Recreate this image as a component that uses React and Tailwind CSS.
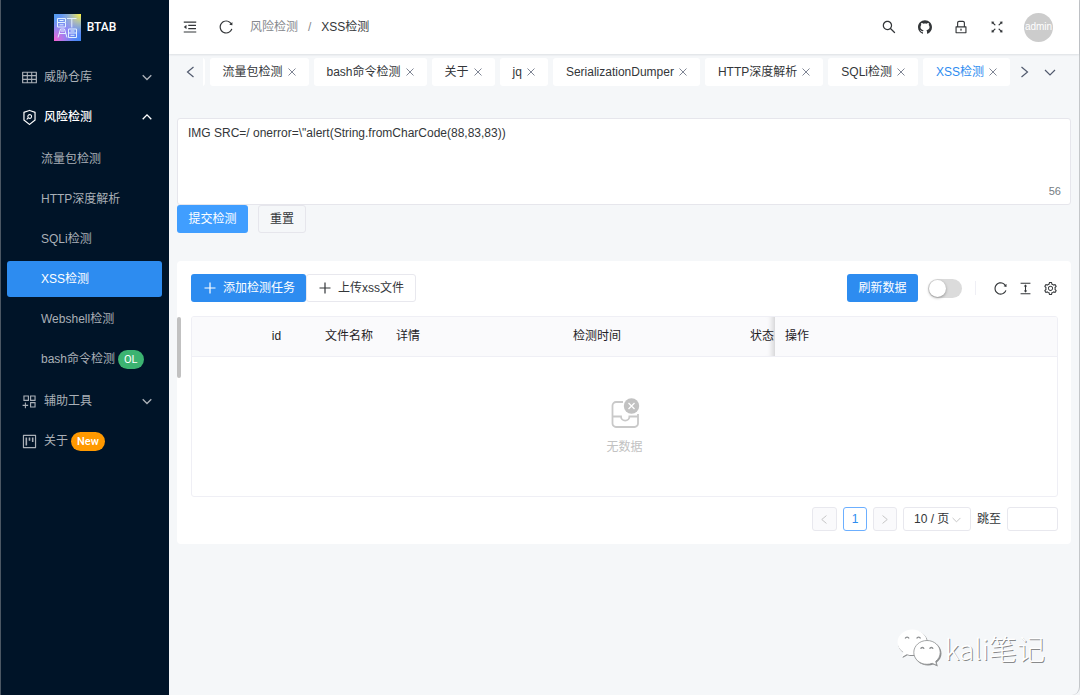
import React, { useState } from 'react';
import {
  AiFillGithub,
  AiOutlineAppstoreAdd,
  AiOutlineColumnHeight,
  AiOutlineFullscreen,
  AiOutlineLock,
  AiOutlineMenuFold,
  AiOutlineProject,
  AiOutlineReload,
  AiOutlineSearch,
  AiOutlineSecurityScan,
  AiOutlineSetting,
  AiOutlineTable,
} from 'react-icons/ai';

const riskItems = [
  { label: '流量包检测' },
  { label: 'HTTP深度解析' },
  { label: 'SQLi检测' },
  { label: 'XSS检测' },
  { label: 'Webshell检测' },
  { label: 'bash命令检测', badge: 'OL' },
];

const tabs = ['流量包检测', 'bash命令检测', '关于', 'jq', 'SerializationDumper', 'HTTP深度解析', 'SQLi检测', 'XSS检测'];

// Simple stroke chevron, picked by direction
const paths = {
  down: 'M2 5l5 5 5-5',
  up: 'M2 9.5l5-5 5 5',
  left: 'M9.5 2l-6 5 6 5',
  right: 'M4.5 2l6 5-6 5',
};

const Chevron = ({ dir, size = 14, width = 1.2 }) => (
  <svg width={size} height={size} viewBox="0 0 14 14" fill="none" stroke="currentColor" strokeWidth={width}>
    <path d={paths[dir]} />
  </svg>
);

const Plus = () => (
  <svg width="12" height="12" viewBox="0 0 12 12" stroke="currentColor" strokeWidth="1.2">
    <path d="M6 0.5v11M0.5 6h11" />
  </svg>
);

const Logo = () => (
  <svg width="27" height="27" viewBox="0 0 27 27" fill="none">
    <defs>
      <linearGradient id="logoBase" x1="0" y1="0" x2="1" y2="1">
        <stop offset="0" stopColor="#4f9df0" />
        <stop offset="0.5" stopColor="#8d8cf5" />
        <stop offset="1" stopColor="#3f86f5" />
      </linearGradient>
      <radialGradient id="logoYellow" cx="1" cy="0" r="0.75">
        <stop offset="0" stopColor="#fff43a" />
        <stop offset="1" stopColor="#9ad6c0" stopOpacity="0" />
      </radialGradient>
      <radialGradient id="logoPink" cx="0" cy="1" r="0.75">
        <stop offset="0" stopColor="#ff5fd0" />
        <stop offset="1" stopColor="#b07cf5" stopOpacity="0" />
      </radialGradient>
    </defs>
    <rect width="27" height="27" fill="url(#logoBase)" />
    <rect width="27" height="27" fill="url(#logoYellow)" />
    <rect width="27" height="27" fill="url(#logoPink)" />
    <g stroke="#e3f1ff" strokeWidth="1">
      <path d="M3.5 4.5h8v4h-8zM3.5 8.5v4.5h8v-4M5.5 6.5h4M5.5 10.8h4" />
      <path d="M13 4.500h9.500M17.800 4.500v9" />
      <path d="M4 23.500l2.500-8.500h4l2.500 8.500M5 19.500h7M7 17h3" />
      <path d="M14.500 15h8v4h-8zM14.500 19v4.500h8V19M16.500 17h4M16.500 21.300h4" />
    </g>
  </svg>
);

const EmptyIcon = () => (
  <svg width="30" height="32" viewBox="0 0 30 32" fill="none">
    <path d="M13 5H6a3.500 3.500 0 0 0-3.500 3.500v18A3.500 3.500 0 0 0 6 30h18.500a3.500 3.500 0 0 0 3.500-3.500V17" stroke="#c9c9c9" strokeWidth="1.800" />
    <path d="M2.500 19.500H11a4.200 4.200 0 0 0 8.400 0H28" stroke="#c9c9c9" strokeWidth="1.800" />
    <circle cx="21.500" cy="9" r="7.700" fill="#c2c2c2" />
    <path d="M18.500 6l6 6M24.500 6l-6 6" stroke="#fff" strokeWidth="1.300" />
  </svg>
);

// Two chat bubbles, the small one laid over the big one
const ChatLogo = () => (
  <svg width="45" height="40" viewBox="0 0 45 40">
    <g fill="#8d8f91">
      <path d="M16 2.500c8.300 0 15 5.700 15 12.800s-6.700 12.800-15 12.800c-2 0-3.800-.3-5.500-.9L5.500 30l1.300-5C3.200 22.600 1 19.200 1 15.300 1 8.200 7.700 2.500 16 2.500z" />
      <path d="M31 13.500c7.500 0 13.500 5.400 13.500 12 0 3.600-1.800 6.700-4.700 8.900l1 4.100-4.500-2c-1.700.6-3.400 1-5.300 1-7.500 0-13.500-5.400-13.500-12s6-12 13.500-12z" />
    </g>
    <path fill="#fff" d="M15.300 1.500c8 0 14.700 5.700 14.700 12.800s-6.700 12.800-14.700 12.800c-2 0-3.800-.3-5.500-.9L5 29l1.200-5C2.700 21.600.500 18.200.500 14.300.500 7.200 7.300 1.500 15.300 1.500z" />
    <path fill="#fff" stroke="#8d8f91" strokeWidth="0.800" d="M30 12.500c7.300 0 13.200 5.300 13.200 11.900 0 3.600-1.700 6.700-4.500 8.900l1 4-4.500-2c-1.700.6-3.300 1-5.200 1-7.300 0-13.200-5.300-13.200-11.900S22.700 12.500 30 12.500z" />
    <g fill="none" stroke="#8d8f91" strokeWidth="1.300">
      <path d="M8.200 10.500a2 2 0 0 1 3.800 0M19.700 10.500a2 2 0 0 1 3.800 0" />
      <path d="M23.700 20.800a1.700 1.700 0 0 1 3.300 0M32.700 20.800a1.700 1.700 0 0 1 3.300 0" />
    </g>
  </svg>
);

const MenuRow = ({ icon, label, bold, dir, badge }) => (
  <a href="#" className={`flex h-9 items-center pl-5 pr-4 ${bold ? 'text-white' : 'text-[#aab0b7]'}`}>
    <span className="mr-[6px]">{icon}</span>
    <span className={bold ? 'font-medium' : ''}>{label}</span>
    {badge && (
      <span className="ml-[3px] rounded-full bg-[#ff9900] px-[6px] font-['Roboto'] text-[11px] leading-[19px] font-medium text-white">{badge}</span>
    )}
    {dir && (
      <span className="ml-auto">
        <Chevron dir={dir} size={12} width={1.6} />
      </span>
    )}
  </a>
);

const Sidebar = () => (
  <aside className="flex w-[169px] shrink-0 flex-col border-l border-[#4b5763] bg-[#001428]">
    <div className="flex h-[54px] items-center justify-center gap-[6px] font-['Roboto'] font-medium text-white">
      <Logo />
      BTAB
    </div>
    <nav className="mt-[5px] flex flex-col gap-1">
      <MenuRow icon={<AiOutlineTable size={17} />} label="威胁仓库" dir="down" />
      <MenuRow icon={<AiOutlineSecurityScan size={17} />} label="风险检测" dir="up" bold />
      <ul className="flex flex-col gap-1 py-[2px] pr-[7px] pl-[6px]">
        {riskItems.map((item) => (
          <li key={item.label}>
            <a
              href="#"
              className={`flex h-9 items-center rounded-[3px] pl-[34px] ${
                item.label === 'XSS检测' ? 'bg-[#2d8cf0] text-white' : 'text-[#aab0b7]'
              }`}
            >
              {item.label}
              {item.badge && (
                <span className="ml-[3px] rounded-full bg-[#3cb371] px-[6px] font-['Roboto'] text-[11px] leading-[19px] text-white">{item.badge}</span>
              )}
            </a>
          </li>
        ))}
      </ul>
      <MenuRow icon={<AiOutlineAppstoreAdd size={17} />} label="辅助工具" dir="down" />
      <MenuRow icon={<AiOutlineProject size={17} />} label="关于" badge="New" />
    </nav>
  </aside>
);

const IconButton = ({ label, className, children }) => (
  <button type="button" aria-label={label} className={`flex items-center justify-center ${className}`}>
    {children}
  </button>
);

const Header = () => (
  <header className="flex h-[54px] items-center bg-white pl-[3px] pr-[26px] text-[#333639] shadow-[0_1px_2px_rgba(0,21,41,0.1)]">
    <IconButton label="menu" className="h-9 w-9"><AiOutlineMenuFold size={16} /></IconButton>
    <IconButton label="reload" className="h-9 w-9"><AiOutlineReload size={16} /></IconButton>
    <nav className="ml-[6px] flex items-center">
      <a href="#" className="text-[#85888d]">风险检测</a>
      <span className="mx-[10px] text-[#85888d]">/</span>
      <span>XSS检测</span>
    </nav>
    <div className="ml-auto flex items-center">
      <IconButton label="search" className="h-9 w-9"><AiOutlineSearch size={16} /></IconButton>
      <IconButton label="github" className="h-9 w-9"><AiFillGithub size={16} /></IconButton>
      <IconButton label="lock" className="h-9 w-9"><AiOutlineLock size={16} /></IconButton>
      <IconButton label="fullscreen" className="h-9 w-9"><AiOutlineFullscreen size={16} /></IconButton>
      <span className="ml-[9px] flex h-[29px] w-[29px] items-center justify-center rounded-full bg-[#cccccc] text-[10px] text-white">admin</span>
    </div>
  </header>
);

const TabBar = ({ active, onSelect }) => (
  <div className="flex items-center py-1 pl-[10px] pr-4 text-[#333639]">
    <IconButton label="prev tabs" className="h-7 w-6 shrink-0 text-[#515a6e]"><Chevron dir="left" size={14} /></IconButton>
    <div className="flex min-w-0 flex-1 justify-end gap-[5px] overflow-hidden">
      <span className="w-1 shrink-0 rounded-r-[3px] bg-white" />
      {tabs.map((tab) => (
        <div
          key={tab}
          className={`flex h-7 shrink-0 items-center gap-[5px] rounded-[3px] bg-white px-[13px] ${active === tab ? 'text-[#2d8cf0]' : ''}`}
        >
          <button type="button" onClick={() => onSelect(tab)}>{tab}</button>
          <button type="button" aria-label={`close ${tab}`} className="text-[#808695]">
            <svg width="8" height="8" viewBox="0 0 8 8" stroke="currentColor" strokeWidth="1">
              <path d="M0.500 0.500l7 7M7.500 0.500l-7 7" />
            </svg>
          </button>
        </div>
      ))}
    </div>
    <IconButton label="next tabs" className="h-7 w-[27px] shrink-0 text-[#515a6e]"><Chevron dir="right" size={14} /></IconButton>
    <IconButton label="tab menu" className="h-7 w-[26px] shrink-0 text-[#515a6e]"><Chevron dir="down" size={14} /></IconButton>
  </div>
);

const DataTable = () => (
  <div className="mt-[14px] overflow-hidden rounded-[3px] border border-[#efeff5]">
    <table className="w-full table-fixed border-collapse text-left">
      <colgroup>
        <col className="w-[46px]" />
        <col className="w-[77px]" />
        <col className="w-[71px]" />
        <col className="w-[177px]" />
        <col className="w-[177px]" />
        <col className="w-[35px]" />
        <col />
      </colgroup>
      <thead className="bg-[#fafafc] text-[#1f2225]">
        <tr className="h-[39px] border-b border-[#efeff5]">
          <th />
          <th className="text-center font-normal">id</th>
          <th className="pl-[10px] font-normal whitespace-nowrap">文件名称</th>
          <th className="pl-[10px] font-normal">详情</th>
          <th className="pl-[10px] font-normal">检测时间</th>
          <th className="pl-[10px] font-normal whitespace-nowrap shadow-[inset_-8px_0_6px_-6px_rgba(0,0,0,0.18)]">状态</th>
          <th className="pl-[10px] font-normal">操作</th>
        </tr>
      </thead>
      <tbody>
        <tr>
          <td colSpan={7} className="h-[140px]">
            <div className="flex flex-col items-center gap-[10px] text-[#c2c2c2]">
              <EmptyIcon />
              无数据
            </div>
          </td>
        </tr>
      </tbody>
    </table>
  </div>
);

const Pagination = () => (
  <div className="mt-[10px] flex items-center justify-end gap-[6px] text-[#333639]">
    <IconButton label="prev page" className="h-6 w-[25px] rounded-[3px] border border-[#e8e8ee] bg-[#fafafc] text-[#c2c2c2]"><Chevron dir="left" size={11} /></IconButton>
    <button type="button" className="h-6 w-6 rounded-[3px] border border-[#6cafff] text-[#2d8cf0]">1</button>
    <IconButton label="next page" className="h-6 w-6 rounded-[3px] border border-[#e8e8ee] bg-[#fafafc] text-[#c2c2c2]"><Chevron dir="right" size={11} /></IconButton>
    <div className="relative">
      <select aria-label="page size" className="h-6 w-[68px] appearance-none rounded-[3px] border border-[#e8e8ee] bg-white pl-[10px]">
        <option>10 / 页</option>
      </select>
      <span className="pointer-events-none absolute top-[7px] right-[9px] text-[#c2c2c2]">
        <Chevron dir="down" size={11} />
      </span>
    </div>
    <label htmlFor="jump">跳至</label>
    <input id="jump" type="text" className="h-6 w-[51px] rounded-[3px] border border-[#e8e8ee] px-2" />
  </div>
);

const App = () => {
  const [active, setActive] = useState('XSS检测');
  const [text, setText] = useState('IMG SRC=/ onerror=\\"alert(String.fromCharCode(88,83,83))');
  const [auto, setAuto] = useState(false);

  return (
    <div className="flex min-h-screen bg-[#f5f7f9] font-['Liberation_Sans','Noto_Sans_CJK_SC',sans-serif] text-xs">
      <Sidebar />
      <div className="flex min-w-0 flex-1 flex-col rounded-br-lg border-r border-[#c4c7ca]">
        <Header />
        <TabBar active={active} onSelect={setActive} />

        <main className="px-2 pt-7">
          {/* Payload input */}
          <div className="relative">
            <textarea
              aria-label="payload"
              value={text}
              onChange={(e) => setText(e.target.value)}
              className="block h-[87px] w-full resize-none rounded-[3px] border border-[#e6e6ec] bg-white px-[10px] py-[6px] text-[#333639] outline-none"
            />
            <span className="absolute right-[10px] bottom-[6px] text-[11px] text-[#767c82]">{text.length}</span>
          </div>
          <div className="flex gap-[10px]">
            <button type="button" className="h-7 w-[71px] rounded-[3px] bg-[#409eff] text-white">提交检测</button>
            <button type="button" onClick={() => setText('')} className="h-7 w-12 rounded-[3px] border border-[#e6e6ec] text-[#333639]">重置</button>
          </div>

          {/* Task list */}
          <section className="relative mt-7 rounded-[4px] bg-white py-[13px] pr-[13px] pl-[14px]">
            <span className="absolute top-[56px] left-0 h-[61px] w-1 rounded-full bg-[#c1c1c1]" />
            <div className="flex items-center">
              <button type="button" className="flex h-7 items-center gap-[7px] rounded-[3px] bg-[#2d8cf0] pr-[11px] pl-[13px] text-white">
                <Plus />
                添加检测任务
              </button>
              <button type="button" className="flex h-7 items-center gap-[7px] rounded-[3px] border border-[#e8e8ee] pr-[11px] pl-3 text-[#333639]">
                <Plus />
                上传xss文件
              </button>
              <div className="ml-auto flex items-center text-[#333639]">
                <button type="button" className="h-7 w-[71px] rounded-[3px] bg-[#2d8cf0] text-white">刷新数据</button>
                <input
                  type="checkbox"
                  role="switch"
                  aria-label="auto refresh"
                  checked={auto}
                  onChange={() => setAuto(!auto)}
                  className="ml-[10px] h-[19px] w-[34px] appearance-none rounded-full bg-[#dbdbdb] p-px before:block before:h-[17px] before:w-[17px] before:rounded-full before:bg-white before:shadow-[0_1px_3px_rgba(0,0,0,0.35)] checked:bg-[#2d8cf0] checked:before:ml-[15px]"
                />
                <span className="mr-3 ml-[13px] h-[14px] w-px bg-[#efeff5]" />
                <IconButton label="refresh" className="h-6 w-[25px]"><AiOutlineReload size={15} /></IconButton>
                <IconButton label="density" className="h-6 w-[25px]"><AiOutlineColumnHeight size={15} /></IconButton>
                <IconButton label="columns" className="-mr-[5px] h-6 w-[25px]"><AiOutlineSetting size={15} /></IconButton>
              </div>
            </div>
            <DataTable />
            <Pagination />
          </section>
        </main>

        <footer className="mt-auto flex items-center justify-end gap-[3px] pr-[34px] pb-[26px] font-['Noto_Sans_CJK_SC',sans-serif] text-[28px] leading-[42px] font-light text-white text-shadow-[1px_1px_0px_rgba(0,0,0,0.45)]">
          <ChatLogo />
          kali笔记
        </footer>
      </div>
    </div>
  );
};

export default App;
